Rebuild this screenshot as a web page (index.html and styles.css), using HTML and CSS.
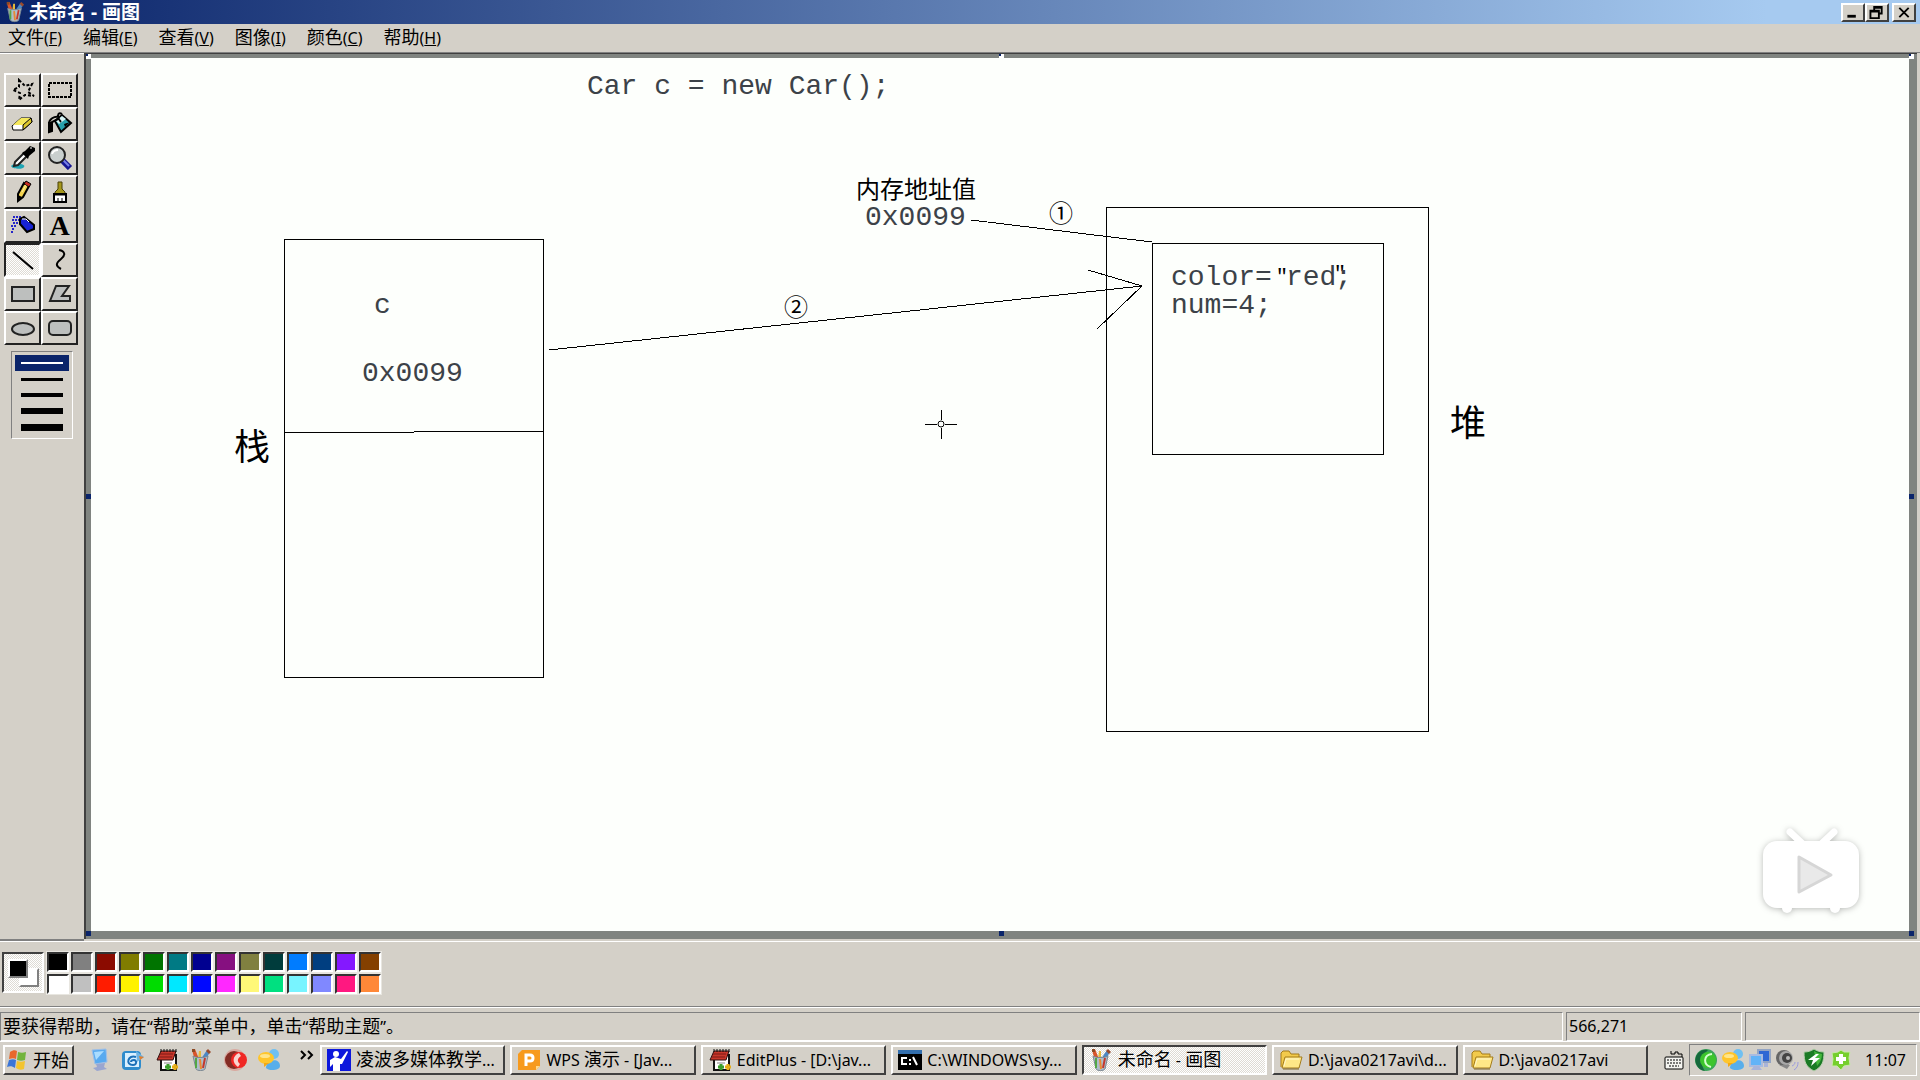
FILE: index.html
```html
<!DOCTYPE html>
<html lang="zh-CN">
<head>
<meta charset="utf-8">
<title>未命名 - 画图</title>
<link rel="stylesheet" href="styles.css">
</head>
<body>
<svg class="defs" aria-hidden="true">
  <defs>
    <symbol id="paint" viewBox="0 0 24 24">
      <path d="M5 9 3 2l3-1 4 10z" fill="#d8552b"/><path d="M3 1h3v3H3z" fill="#8b4a24"/>
      <path d="m9 11 1-8 2 0 0 9z" fill="#e6b93a"/><path d="m12 11 6-9 3 2-5 9z" fill="#4c88c4"/><path d="m17 3 2-2 3 3-2 2z" fill="#9a4a2c"/>
      <path d="M4 8c3 2 11 2 15 0l-3 13c-1 2-8 2-9 0z" fill="#aebdc9" stroke="#7b8792"/>
      <path d="M7 10v10" stroke="#53a646" stroke-width="2"/><path d="m11 11 1 10" stroke="#e88a33" stroke-width="2"/><path d="m16 10-2 10" stroke="#c5382c" stroke-width="2"/>
    </symbol>
    <symbol id="notes" viewBox="0 0 24 24">
      <path d="M6 7h15v15H6z" fill="#fff" stroke="#111" stroke-width="2"/>
      <path d="M6 3h15l-3 9H2z" fill="#c8372b" stroke="#301010"/>
      <path d="M6 1v3m3-3v3m3-3v3m3-3v3m3-3v3m3-3v3" stroke="#111"/><path d="M5 6h13M4 9h13" stroke="#7c1b16"/>
      <path d="M10 19h6m-3-3v6" stroke="#3b9f2c" stroke-width="3"/><path d="M17 19h6m-3-3v6" stroke="#e5ad17" stroke-width="3"/><path d="M9 15h8" stroke="#888"/>
    </symbol>
    <symbol id="chat" viewBox="0 0 24 24">
      <circle cx="17" cy="6" r="5" fill="#6fc0f2"/><path d="M9 20c0-9 14-11 14-2 0 5-12 5-14 2z" fill="#58aeea"/>
      <ellipse cx="9" cy="10" rx="8" ry="6" fill="#ffc52b"/><path d="m7 15 0 4 5-4z" fill="#f3a914"/><ellipse cx="8" cy="8" rx="5" ry="2" fill="#ffe58a"/>
    </symbol>
    <symbol id="folder" viewBox="0 0 24 24">
      <path d="M2 19V5l2-2h6l2 3h8v4" fill="#f2ca4b" stroke="#a37b1b"/><path d="m3 20 3-11h17l-3 11z" fill="#ffe887" stroke="#a37b1b"/><path d="m5 18 2-7h13" stroke="#fff7c9" fill="none"/><path d="M4 21h16" stroke="#7d6528"/>
    </symbol>
  </defs>
</svg>

<header class="titlebar">
  <svg class="icon"><use href="#paint"/></svg>
  <h1>未命名 - 画图</h1>
  <div class="window-buttons">
    <button class="winbtn" aria-label="最小化"><svg viewBox="0 0 20 16"><path d="M4 12h9" stroke="#000" stroke-width="3"/></svg></button>
    <button class="winbtn" aria-label="还原"><svg viewBox="0 0 20 16"><path d="M7 5V2h8v7h-3M7 3h8M3 6h9v8H3zM3 7h9" fill="none" stroke="#000" stroke-width="2"/></svg></button>
    <button class="winbtn close" aria-label="关闭"><svg viewBox="0 0 20 16"><path d="m5 3 10 10M15 3 5 13" stroke="#000" stroke-width="2"/></svg></button>
  </div>
</header>

<nav class="menubar">
  <button>文件<span class="lat">(<u>F</u>)</span></button>
  <button>编辑<span class="lat">(<u>E</u>)</span></button>
  <button>查看<span class="lat">(<u>V</u>)</span></button>
  <button>图像<span class="lat">(<u>I</u>)</span></button>
  <button>颜色<span class="lat">(<u>C</u>)</span></button>
  <button>帮助<span class="lat">(<u>H</u>)</span></button>
</nav>

<main class="workspace">
  <aside class="toolbox">
    <div class="tools">
      <button aria-label="任意形状的裁剪"><svg viewBox="0 0 26 24"><path d="m8 2 6 6 7-2-4 8 6 4-9-1-6 5 1-7-7-3 6-3z" transform="translate(1 0)" fill="none" stroke="#000" stroke-width="2" stroke-dasharray="3 2"/></svg></button>
      <button aria-label="选定"><svg viewBox="0 0 26 24"><path d="M2 5h22v14H2z" fill="none" stroke="#000" stroke-width="2" stroke-dasharray="3 1"/></svg></button>
      <button aria-label="橡皮"><svg viewBox="0 0 26 24"><path d="m2 14 9-8h10l1 4-9 8H3z" fill="#fff" stroke="#000"/><path d="m3 13 8-7h10l-8 7z" fill="#f5e85c"/><path d="M13 13l8-7 1 4-9 8z" fill="#ddc72c" stroke="#000"/></svg></button>
      <button aria-label="用颜色填充"><svg viewBox="0 0 26 24"><path d="m8 9 7-6 9 8-10 9z" fill="#26a0ac" stroke="#000" stroke-width="2"/><path d="m9 9 6-5 4 3-7 5z" fill="#d8f4f4"/><path d="m17 12 6-2-5 5z" fill="#000"/><path d="M12 5C7 4 2 7 2 12v8l3-1V10l6-3M15 2c-5-3-5 4-1 8" fill="none" stroke="#000" stroke-width="2"/><path d="M1 10h4v9H2z"/></svg></button>
      <button aria-label="取色"><svg viewBox="0 0 26 24"><path d="M1 20c3-4 16-2 13 1-1 3-12 2-13-1z" fill="#20a4b4"/><path d="m4 20 1-4 9-9 3 3-9 9z" fill="#fff" stroke="#222" stroke-width="2"/><path d="m12 7 3-2 5-5 5 2v3l-6 5-1 3z" fill="#000"/><path d="m20 2 2 0" stroke="#fff"/></svg></button>
      <button aria-label="放大镜"><svg viewBox="0 0 26 24"><path d="m15 14 8 8" stroke="#161693" stroke-width="6"/><path d="m16 14 6 6" stroke="#7880e8" stroke-width="2"/><circle cx="10" cy="9" r="8" fill="#c9cfce" stroke="#222" stroke-width="2"/><path d="M5 8c1-3 3-4 6-4" stroke="#fff" fill="none" stroke-width="2"/></svg></button>
      <button aria-label="铅笔"><svg viewBox="0 0 26 24"><path d="m8 14 6-11 5 3-6 11-5 4z" fill="#f3d34f" stroke="#000" stroke-width="2"/><path d="m14 4 2-3 5 3-2 3z" fill="#c52b20" stroke="#000"/><path d="m8 15 4 2-5 4z" fill="#000"/><path d="m12 12 4-7" stroke="#fff0a0"/></svg></button>
      <button aria-label="刷子"><svg viewBox="0 0 26 24"><path d="M11 2h4v7l3 3v3H8v-3l3-3z" fill="#a6981e" stroke="#4b430b"/><path d="M7 14h12v8H7z" fill="#fff" stroke="#000" stroke-width="2"/><path d="M7 15h12M11 18v4m4-4v4" stroke="#000"/></svg></button>
      <button aria-label="喷枪"><svg viewBox="0 0 26 24"><path d="M3 3h9M2 6h7M3 9h5M1 12h6M2 15h3M1 18h3" stroke="#2626c8" stroke-width="2" stroke-dasharray="2 1"/><path d="m10 5 4-2 10 8v4l-7 3-7-8z" fill="#1722d3" stroke="#000" stroke-width="2"/><path d="m12 5 4 0 3 3" stroke="#fff" fill="none"/></svg></button>
      <button class="letter" aria-label="文字">A</button>
      <button class="pressed" aria-label="直线"><svg viewBox="0 0 26 24"><path d="m3 4 20 17" stroke="#000" stroke-width="2"/></svg></button>
      <button aria-label="曲线"><svg viewBox="0 0 26 24"><path d="M12 2c6 1 7 5 2 9s-6 7 0 10" fill="none" stroke="#000" stroke-width="2"/></svg></button>
      <button aria-label="矩形"><svg viewBox="0 0 26 24"><path d="M2 5h22v14H2z" fill="#bdbfbe" stroke="#222" stroke-width="2"/></svg></button>
      <button aria-label="多边形"><svg viewBox="0 0 26 24"><path d="M9 4h13l-7 10h8v5H3z" fill="#bdbfbe" stroke="#222" stroke-width="2"/></svg></button>
      <button aria-label="椭圆"><svg viewBox="0 0 26 24"><ellipse cx="13" cy="13" rx="11" ry="6" fill="#bdbfbe" stroke="#222" stroke-width="2"/></svg></button>
      <button aria-label="圆角矩形"><svg viewBox="0 0 26 24"><rect x="2" y="5" width="22" height="14" rx="4" fill="#bdbfbe" stroke="#222" stroke-width="2"/></svg></button>
    </div>
    <div class="widths">
      <button class="w1 chosen" aria-label="1 像素"><i></i></button>
      <button class="w2" aria-label="2 像素"><i></i></button>
      <button class="w3" aria-label="3 像素"><i></i></button>
      <button class="w4" aria-label="4 像素"><i></i></button>
      <button class="w5" aria-label="5 像素"><i></i></button>
    </div>
  </aside>

  <div class="viewport">
    <i class="handle tl"></i><i class="handle tc"></i><i class="handle tr"></i>
    <i class="handle ml"></i><i class="handle mr"></i>
    <i class="handle bl"></i><i class="handle bc"></i><i class="handle br"></i>
    <div class="canvas">
      <svg class="drawing" aria-hidden="true">
        <g fill="none" stroke="#000" stroke-width="1" shape-rendering="crispEdges">
          <path d="M193 181h259v438H193z"/>
          <path d="M193 374h130M323 373h130"/>
          <path d="M1015 149h322v524h-322z"/>
          <path d="M1061 185h231v211h-231z"/>
          <path d="m880 162 181 22M458 292l593-64M997 212l54 16M1006 271l45-43"/>
          <path d="M834 366h12M854 366h12M850 352v10M850 370v11"/>
        </g>
        <circle cx="850" cy="366" r="3" fill="none" stroke="#000"/>
      </svg>
      <span class="label code t-new">Car c = new Car();</span>
      <span class="label han t-addr">内存地址值</span>
      <span class="label code t-addr-value">0x0099</span>
      <span class="label han t-one">①</span>
      <span class="label han t-two">②</span>
      <span class="label code t-c">c</span>
      <span class="label code t-c-value">0x0099</span>
      <span class="label big t-stack">栈</span>
      <span class="label big t-heap">堆</span>
      <span class="label code t-color">color=</span>
      <span class="label quote t-open">"</span>
      <span class="label code t-red">red</span>
      <span class="label quote t-close">"</span>
      <span class="label code t-semi">;</span>
      <span class="label code t-num">num=4;</span>
      <svg class="play" viewBox="0 0 112 100" aria-hidden="true">
        <path d="m34 11 17 16M78 11 61 27" stroke="#fff" stroke-width="7" stroke-linecap="round"/>
        <rect x="7" y="20" width="96" height="67" rx="14" fill="#fff"/><circle cx="31" cy="87" r="5" fill="#fff"/><circle cx="79" cy="87" r="5" fill="#fff"/>
        <path d="M43 36v35l32-17z" fill="#e9e9e9" stroke="#d6d6d6" stroke-width="3" stroke-linejoin="round"/>
      </svg>
    </div>
  </div>
</main>

<section class="palette">
  <div class="current"><i class="back"></i><i class="front"></i></div>
  <div class="swatches">
    <button class="c-black" aria-label="黑"></button><button class="c-gray" aria-label="灰"></button><button class="c-maroon" aria-label="深红"></button><button class="c-olive" aria-label="橄榄"></button><button class="c-green" aria-label="绿"></button><button class="c-teal" aria-label="青"></button><button class="c-navy" aria-label="深蓝"></button><button class="c-purple" aria-label="紫"></button><button class="c-khaki" aria-label="土黄"></button><button class="c-pine" aria-label="墨绿"></button><button class="c-azure" aria-label="天蓝"></button><button class="c-steel" aria-label="钢蓝"></button><button class="c-violet" aria-label="蓝紫"></button><button class="c-brown" aria-label="棕"></button>
    <button class="c-white" aria-label="白"></button><button class="c-silver" aria-label="银"></button><button class="c-red" aria-label="红"></button><button class="c-yellow" aria-label="黄"></button><button class="c-lime" aria-label="亮绿"></button><button class="c-cyan" aria-label="亮青"></button><button class="c-blue" aria-label="蓝"></button><button class="c-magenta" aria-label="洋红"></button><button class="c-cream" aria-label="浅黄"></button><button class="c-mint" aria-label="薄荷"></button><button class="c-sky" aria-label="浅蓝"></button><button class="c-lilac" aria-label="浅紫"></button><button class="c-rose" aria-label="玫红"></button><button class="c-orange" aria-label="橙"></button>
  </div>
</section>

<footer class="statusbar">
  <p class="hint">要获得帮助，请在<span class="lat">“</span>帮助<span class="lat">”</span>菜单中，单击<span class="lat">“</span>帮助主题<span class="lat">”</span>。</p>
  <p class="coords lat">566,271</p>
  <p class="size"></p>
</footer>

<div class="taskbar">
  <button class="start"><svg class="icon" viewBox="0 0 24 24"><path d="M4 4c3-2 5-2 7-1l-1 8c-2-1-4-1-7 0z" fill="#e9682b"/><path d="M12 4c3 1 5 1 8 0l-1 8c-3 1-5 1-8 0z" fill="#72b43c"/><path d="M3 12c3-1 5-1 7 0l-1 8c-3-2-5-2-8-1z" fill="#3a75d8"/><path d="M11 13c3 1 5 1 8 0l-1 8c-3 1-5 1-8-1z" fill="#f3c42e"/></svg>开始</button>
  <div class="quick">
    <button aria-label="显示桌面"><svg class="icon" viewBox="0 0 24 24"><path d="m5 2 14-1 1 13-12 2z" fill="#58aaf0" stroke="#9ebfe8"/><path d="m7 4 10-1-8 9z" fill="#a9dcff"/><path d="m9 16 9-1-1 4 3 2-10 2-4-3 4-1z" fill="#9aa6d0"/></svg></button>
    <button aria-label="邮件"><svg class="icon" viewBox="0 0 24 24"><rect x="1" y="3" width="19" height="19" rx="4" fill="#2f8ccc"/><path d="M4 5h14v14H4z" fill="#d9f0ff"/><path d="M15 9c-8-3-11 8-3 8 4 0 4-5 1-5-3 0-3 2-3 2" fill="none" stroke="#1b70b8" stroke-width="2"/><path d="m15 3 8 6-7 5" fill="#6fb3e2"/><path d="m18 8 5 1-4 3z" fill="#e37e2d"/></svg></button>
    <button aria-label="EditPlus"><svg class="icon"><use href="#notes"/></svg></button>
    <button aria-label="画图"><svg class="icon"><use href="#paint"/></svg></button>
    <button aria-label="播放"><svg class="icon" viewBox="0 0 24 24"><circle cx="12" cy="12" r="11" fill="#d9a9a0"/><circle cx="11" cy="12" r="9" fill="#842c24"/><circle cx="16" cy="12" r="8" fill="#f02724"/><path d="M16 5c-7 3-7 10-1 14l2-3c-3-3-3-5 1-8z" fill="#f9d4cf"/></svg></button>
    <button aria-label="聊天"><svg class="icon"><use href="#chat"/></svg></button>
    <button class="more" aria-label="更多"><svg viewBox="0 0 14 10"><path d="m1 1 4 4-4 4M8 1l4 4-4 4" fill="none" stroke="#000" stroke-width="2"/></svg></button>
  </div>
  <div class="tasks">
    <button><svg class="icon" viewBox="0 0 24 24"><path d="M0 1h24v22H0z" fill="#0c17dc"/><circle cx="9" cy="6" r="3" fill="#fff"/><path d="m3 12 5-3 6 2 6-8 1 1-6 12-2 0v7H6v-7l-3 3z" fill="#fff"/></svg><span>凌波多媒体教学<span class="lat">...</span></span></button>
    <button><svg class="icon" viewBox="0 0 24 24"><path d="M5 2h18v16l-4 4H1V6z" fill="#f79a1d"/><path d="M19 22v-4h4z" fill="#ffd98a"/><path d="M9 18V7h4c4 0 4 6 0 6H9" fill="none" stroke="#fff" stroke-width="3"/></svg><span><span class="lat">WPS </span>演示<span class="lat"> - [Jav...</span></span></button>
    <button><svg class="icon"><use href="#notes"/></svg><span class="lat">EditPlus - [D:\jav...</span></button>
    <button><svg class="icon" viewBox="0 0 24 24"><path d="M0 2h24v20H0z" fill="#000"/><path d="M0 2h24v4H0z" fill="#336fae"/><path d="M9 10H4v6h5M12 11v2m0 2v2M15 9l4 8" fill="none" stroke="#fff" stroke-width="2"/></svg><span class="lat">C:\WINDOWS\sy...</span></button>
    <button class="pressed"><svg class="icon"><use href="#paint"/></svg><span>未命名<span class="lat"> - </span>画图</span></button>
    <button><svg class="icon"><use href="#folder"/></svg><span class="lat">D:\java0217avi\d...</span></button>
    <button><svg class="icon"><use href="#folder"/></svg><span class="lat">D:\java0217avi</span></button>
  </div>
  <svg class="keyboard" viewBox="0 0 20 20" aria-hidden="true"><path d="M7 1v3h4V2h3v2h4v3" fill="none" stroke="#000"/><rect x="1" y="7" width="18" height="12" rx="1" fill="#f4f4f0" stroke="#000"/><path d="M3 10h14M3 13h14M5 16h10" stroke="#000" stroke-dasharray="2 1"/></svg>
  <div class="tray">
    <svg class="icon" viewBox="0 0 24 24"><circle cx="12" cy="12" r="11" fill="#3ca45c"/><path d="M4 5a11 11 0 0 0 7 18C6 17 7 8 14 2 10 1 7 2 4 5z" fill="#16693c"/><circle cx="14" cy="12" r="8" fill="#3cc52c"/><path d="M18 6c-9 1-9 11-1 13" fill="none" stroke="#d5ffd0" stroke-width="2"/></svg>
    <svg class="icon"><use href="#chat"/></svg>
    <svg class="icon" viewBox="0 0 24 24"><path d="M10 2h12v12H10z" fill="#2e67d4" stroke="#93a4c3" stroke-width="2"/><path d="M2 7h12v11H2z" fill="#62b3f7" stroke="#a9bbe0" stroke-width="2"/><path d="M16 15h4v4h-4zM6 18h5l3 4H3z" fill="#a9b4d9"/></svg>
    <svg class="icon" viewBox="0 0 24 24"><circle cx="9" cy="10" r="8" fill="#666"/><circle cx="11" cy="10" r="7" fill="#a8a8a8"/><circle cx="12" cy="10" r="5" fill="#444"/><circle cx="13" cy="10" r="2" fill="#bbb"/><path d="m4 17 8 4 3-4" fill="#888"/><path d="M17 18c2-1 3-2 3-4m-1 8c3-2 4-4 4-8" fill="none" stroke="#9a9be0" stroke-width="1"/></svg>
    <svg class="icon" viewBox="0 0 24 24"><path d="M12 1c3 2 6 3 10 3 0 10-2 15-10 19C4 19 2 14 2 4c4 0 7-1 10-3z" fill="#1b7a25" stroke="#b8cfae"/><path d="M12 3c3 2 5 2 8 3 0 5-2 9-5 12z" fill="#45b83c"/><path d="m14 6-8 6h5l-2 6 9-8h-5l4-4z" fill="#fff"/></svg>
    <svg class="icon" viewBox="0 0 24 24"><path d="M12 2 15 4h6l-1 6 1 7-6 1-3 4-4-4H3l1-7-1-6 6-1z" fill="#76cf2d" stroke="#c9e8ac"/><path d="M7 11h10m-5-5v10" stroke="#fff" stroke-width="4"/></svg>
    <time class="lat">11:07</time>
  </div>
</div>
</body>
</html>
```
FILE: styles.css
```css
* { box-sizing: border-box; }

:root {
  --face: #d4d0c8;
  --light: #fff;
  --shadow: #808080;
  --dark: #404040;
  --checks: repeating-conic-gradient(#fff 0 25%, #dedbd4 0 50%) 0 0 / 2px 2px;
}

body {
  margin: 0;
  min-height: 100vh;
  display: flex;
  flex-direction: column;
  background: var(--face);
  color: #000;
  font: 18px/24px "Noto Sans", "Noto Sans CJK SC", sans-serif;
}

button {
  margin: 0;
  padding: 0;
  border: 0;
  background: var(--face);
  color: inherit;
  font: inherit;
}

p, h1 { margin: 0; }
svg { display: block; flex: none; }
.defs { position: absolute; width: 0; height: 0; }
.icon { width: 24px; height: 24px; }
.lat { font-size: 16px; }

/* title bar */
.titlebar {
  display: flex;
  align-items: center;
  height: 24px;
  padding: 0 4px 0 3px;
  background: linear-gradient(90deg, #0a246a, #a6caf0 92%);
}
.titlebar .icon { height: 22px; }
.titlebar h1 {
  flex: 1;
  padding-left: 2px;
  color: #fff;
  font-size: 19px;
  line-height: 22px;
  font-weight: 700;
}
.window-buttons { display: flex; }
.winbtn {
  width: 24px;
  height: 19px;
  border: 2px solid;
  border-color: var(--light) var(--dark) var(--dark) var(--light);
}
.winbtn svg { width: 20px; height: 15px; }
.winbtn.close { margin-left: 3px; }

/* menu */
.menubar { display: flex; align-items: flex-start; gap: 21px; height: 28px; padding-left: 8px; }
.menubar button { line-height: 26px; white-space: nowrap; }

/* work area */
.workspace {
  flex: 1;
  display: grid;
  grid-template-columns: 84px 1fr;
  border-top: 1px solid var(--shadow);
}
.toolbox {
  padding: 19px 0 0 4px;
  border-top: 1px solid var(--light);
  border-bottom: 2px solid var(--shadow);
}
.tools {
  display: grid;
  grid-template-columns: 37px 37px;
  grid-auto-rows: 34px;
  width: 74px;
}
.tools button {
  display: grid;
  place-items: center;
  border: 2px solid;
  border-color: var(--light) #222 #222 var(--light);
}
.tools svg { width: 26px; height: 24px; }
.tools .letter { font: 700 28px/28px "Liberation Serif", serif; }
.pressed, .tools .pressed {
  background: var(--checks);
  border-color: #222 var(--light) var(--light) #222;
}
.widths {
  width: 62px;
  margin: 6px 0 0 7px;
  padding: 3px;
  border: 1px solid;
  border-color: var(--shadow) var(--light) var(--light) var(--shadow);
}
.widths button {
  display: grid;
  place-items: center;
  width: 54px;
  height: 16px;
}
.widths i { width: 42px; background: #000; }
.widths .chosen { background: #0a246a; }
.widths .chosen i { background: #fff; }
.w1 i { height: 2px; }
.w2 i { height: 3px; }
.w3 i { height: 4px; }
.w4 i { height: 6px; }
.w5 i { height: 7px; }

.viewport {
  position: relative;
  display: grid;
  padding: 4px 8px 8px 5px;
  margin-right: 3px;
  margin-bottom: 2px;
  border-left: 2px solid var(--dark);
  border-top: 1px solid var(--dark);
  background: #808480;
}
.handle { position: absolute; width: 5px; height: 5px; background: #0a246a; }
.tl, .tc, .tr { top: 0; border-right: 3px solid #fff; border-bottom: 3px solid #fff; }
.tl, .ml, .bl { left: 0; }
.tc, .bc { left: calc(50% - 3px); }
.tr, .mr, .br { right: 3px; }
.ml, .mr { top: calc(50% - 3px); }
.bl, .bc, .br { bottom: 3px; }

.canvas { position: relative; overflow: hidden; background: #fdfffc; }
.drawing { position: absolute; inset: 0; width: 100%; height: 100%; }
.label { position: absolute; white-space: pre; }
.code { font: 28px/28px "Liberation Mono", monospace; color: #3c4248; }
.han { font: 24px/24px "Noto Sans CJK SC", sans-serif; }
.big { font: 36px/36px "Noto Sans CJK SC", sans-serif; }
.quote { font: 24px/24px "Noto Sans", sans-serif; }
.t-new { left: 496px; top: 15px; }
.t-addr { left: 765px; top: 118px; }
.t-addr-value { left: 774px; top: 146px; }
.t-one { left: 958px; top: 142px; }
.t-two { left: 693px; top: 236px; }
.t-c { left: 283px; top: 234px; }
.t-c-value { left: 271px; top: 302px; }
.t-stack { left: 143px; top: 368px; }
.t-heap { left: 1359px; top: 344px; }
.t-color { left: 1080px; top: 206px; }
.t-open { left: 1186px; top: 206px; }
.t-red { left: 1195px; top: 206px; }
.t-close { left: 1244px; top: 203px; }
.t-semi { left: 1244px; top: 206px; }
.t-num { left: 1080px; top: 234px; }
.play {
  position: absolute;
  right: 41px;
  bottom: 10px;
  width: 112px;
  height: 100px;
  filter: drop-shadow(0 1px 3px #0004);
}

/* colours */
.palette {
  display: flex;
  gap: 3px;
  height: 66px;
  padding: 10px 2px;
  border-top: 1px solid var(--light);
  border-bottom: 1px solid var(--shadow);
}
.current {
  position: relative;
  width: 42px;
  height: 41px;
  background: var(--checks);
  border: 2px solid;
  border-color: var(--dark) var(--light) var(--light) var(--dark);
}
.front, .back {
  position: absolute;
  width: 20px;
  height: 19px;
  border: 2px solid;
  border-color: var(--light) var(--shadow) var(--shadow) var(--light);
}
.front { left: 4px; top: 5px; background: #000; }
.back { left: 15px; top: 14px; background: #fff; }
.swatches {
  display: grid;
  grid-template-columns: repeat(14, 22px);
  grid-auto-rows: 20px;
  gap: 2px;
}
.swatches button {
  border: 2px solid;
  border-color: #333 var(--light) var(--light) #333;
  outline: 1px solid #e8e6e0;
}
.c-black { background: #000; } .c-gray { background: #808080; }
.c-maroon { background: #8b0b00; } .c-olive { background: #807c00; }
.c-green { background: #007400; } .c-teal { background: #007a84; }
.c-navy { background: #000090; } .c-purple { background: #861080; }
.c-khaki { background: #808040; } .c-pine { background: #003c3c; }
.c-azure { background: #007cff; } .c-steel { background: #003e80; }
.c-violet { background: #8418ff; } .c-brown { background: #844000; }
.c-white { background: #fff; } .c-silver { background: #c0c0c0; }
.c-red { background: #ff1c00; } .c-yellow { background: #fff200; }
.c-lime { background: #00dc00; } .c-cyan { background: #00e8ff; }
.c-blue { background: #0008ff; } .c-magenta { background: #ff28ff; }
.c-cream { background: #fff878; } .c-mint { background: #00e080; }
.c-sky { background: #78f4ff; } .c-lilac { background: #8088ff; }
.c-rose { background: #ff1880; } .c-orange { background: #ff8838; }

/* status */
.statusbar {
  display: grid;
  grid-template-columns: 1fr 176px 175px;
  gap: 3px;
  height: 34px;
  padding: 4px 0 1px;
  border-top: 1px solid var(--light);
}
.statusbar p {
  padding-left: 2px;
  line-height: 26px;
  white-space: nowrap;
  border: 1px solid;
  border-color: var(--shadow) var(--light) var(--light) var(--shadow);
}

/* taskbar */
.taskbar {
  display: flex;
  align-items: center;
  height: 39px;
  padding: 0 3px 3px;
  border-top: 1px solid var(--light);
}
.start, .tasks button {
  display: flex;
  align-items: center;
  height: 30px;
  border: 2px solid;
  border-color: var(--light) var(--dark) var(--dark) var(--light);
  white-space: nowrap;
}
.start { width: 71px; padding-left: 1px; gap: 3px; }
.quick { display: flex; align-items: center; gap: 10px; width: 246px; padding-left: 13px; }
.quick button { flex: none; }
.more { align-self: flex-start; margin-left: 9px; padding-top: 2px; }
.more svg { width: 14px; height: 10px; }
.tasks { flex: 1; display: flex; gap: 5px; min-width: 0; }
.tasks button { flex: 1 1 0; min-width: 0; gap: 5px; padding-left: 5px; overflow: hidden; }
.tasks .pressed { border-color: var(--dark) var(--light) var(--light) var(--dark); }
.keyboard { width: 20px; height: 20px; margin: 0 5px 0 16px; }
.tray {
  display: flex;
  align-items: center;
  gap: 3px;
  width: 228px;
  height: 32px;
  padding: 0 10px 0 4px;
  border: 1px solid;
  border-color: var(--shadow) var(--light) var(--light) var(--shadow);
}
.tray time { margin-left: auto; }
```
